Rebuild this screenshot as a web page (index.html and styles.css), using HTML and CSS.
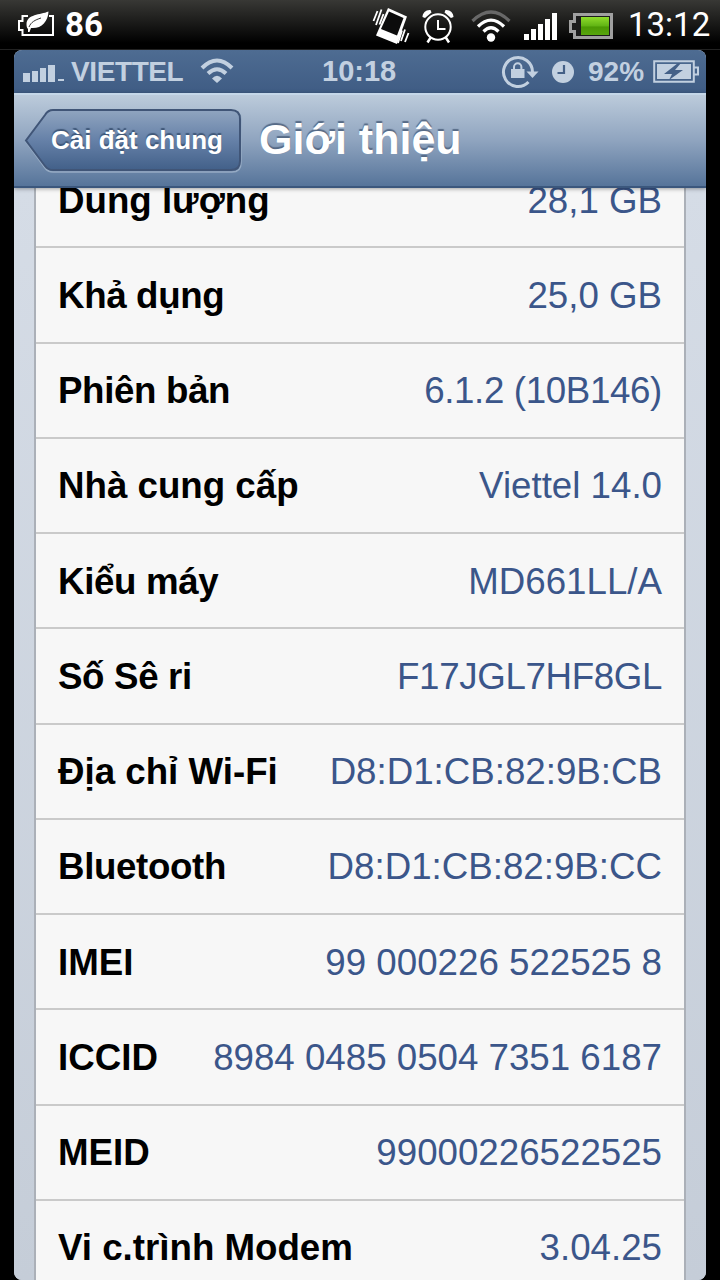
FILE: index.html
```
<!DOCTYPE html>
<html lang="vi">
<head>
    <meta charset="UTF-8">
    <meta name="viewport" content="width=device-width, initial-scale=1.0">
    <title>Giới thiệu</title>
    <link rel="stylesheet" href="styles.css">
</head>
<body>

    <div class="topbar">
        <svg class="leaf" width="38" height="28" viewBox="0 0 38 28">
            <path d="M11 7H5.500v5H2v9h3.500v5H36V7h-4" fill="none" stroke="#fff" stroke-width="2"/>
            <path d="M31.500 2.500C23 6 10 5 9.500 15c0 2 .3 4 1.500 5v3h1.500l1.500-4c10 1 17-6 17.500-16.500z" fill="#fff"/>
            <path d="M12 18c2-5 6-7 12-9" fill="none" stroke="#333" stroke-width="1"/>
        </svg>
        <span class="percent">86</span>
        <div class="top-icons">
            <svg class="vibrate" width="38" height="38" viewBox="0 0 38 38" fill="none" stroke="#fff">
                <path d="M16 2l19 8.500L25 38 4 29.500z" fill="#fff" stroke="none"/>
                <path d="M17 5.500l14.500 6.500L25 29.500 9 23z" fill="#0c0c0c" stroke="none"/>
                <path d="M5.500 5L1.500 15M9.500 3.500L4 19M11.500 8L7.500 18.500M30 24.500L26 37M33 23.500L29 35M36.500 27L33 36" stroke-width="1.800"/>
            </svg>
            <svg class="alarm" width="34" height="36" viewBox="0 0 34 36" fill="none" stroke="#fff" stroke-width="2">
                <circle cx="17" cy="19" r="12.700"/>
                <path d="M17 12v9h7.500" />
                <path d="M10 29l-3.500 5.500M24.500 29l3.500 5.500" stroke-width="2.500"/>
                <path d="M1.500 9C1.500 5 5 1.500 9.500 2l1 2.500L4 10zM32.500 9c0-4-3.500-7.500-8-7l-1 2.500L30 10z" fill="#fff" stroke="none"/>
            </svg>
            <svg class="wifi" width="40" height="34" viewBox="0 0 40 34" fill="none" stroke="#fff" stroke-width="3.200">
                <path d="M1.500 12Q20-6 38.500 12" stroke="#686868"/>
                <path d="M7 17.500Q20 4.500 33 17.500"/>
                <path d="M12.500 22.500Q20 15 27.500 22.500"/>
                <circle cx="20" cy="28.500" r="4.200" fill="#fff" stroke="none"/>
            </svg>
            <svg class="signal" width="33" height="27" viewBox="0 0 33 27" fill="#fff">
                <path d="M0 21h5v6H0zM7 16h5v11H7zM14 11h5v16h-5zM21 6h5v21h-5zM28 0h5v27h-5z"/>
            </svg>
            <svg class="battery" width="44" height="26" viewBox="0 0 44 26">
                <defs>
                    <linearGradient id="green" x2="0" y2="1">
                        <stop offset="0" stop-color="#8fdc2b"/>
                        <stop offset=".5" stop-color="#61b414"/>
                        <stop offset=".55" stop-color="#4b9903"/>
                        <stop offset="1" stop-color="#57a50d"/>
                    </linearGradient>
                </defs>
                <path d="M5.500 1.500h37v23h-37v-6h-4v-10h4z" fill="#1c1c1c" stroke="#a0a0a0" stroke-width="3"/>
                <path d="M12 4h28v18H12z" fill="url(#green)"/>
            </svg>
            <span class="time">13:12</span>
        </div>
    </div>

    <div class="phone">
        <div class="statusbar">
            <svg class="bars" width="41" height="18" viewBox="0 0 41 18" fill="#c2d0e0">
                <path d="M0 9h7v9H0zM9 7h6v11H9zM17 4h6v14h-6zM25 1h7v17h-7zM35 15h6v2h-6z"/>
            </svg>
            <span class="carrier">VIETTEL</span>
            <svg class="ios-wifi" width="34" height="25" viewBox="0 0 34 25" fill="none" stroke="#c2d0e0" stroke-width="4">
                <path d="M2 10Q17-5 32 10"/>
                <path d="M8 15.500Q17 7 26 15.500"/>
                <path d="M12 20.500Q17 15 22 20.500L17 25z" fill="#c2d0e0" stroke="none"/>
            </svg>
            <span class="clock">10:18</span>
            <svg class="lock" width="38" height="34" viewBox="0 0 38 34" fill="none" stroke="#c2d0e0">
                <path d="M27.500 27A14.500 14.500 0 1 1 31.500 17" stroke-width="3"/>
                <path d="M25.500 16.500h12L31.500 23z" fill="#c2d0e0" stroke="none"/>
                <path d="M10 14h13.500v9H10z" fill="#c2d0e0" stroke="none"/>
                <path d="M13 14v-2a3.700 3.700 0 0 1 7.400 0V14" stroke-width="2"/>
            </svg>
            <svg class="alarm-dot" width="22" height="22" viewBox="0 0 22 22">
                <circle cx="11" cy="11" r="11" fill="#c2d0e0"/>
                <path d="M12 4v8H5.500" fill="none" stroke="#446087" stroke-width="2.200"/>
            </svg>
            <span class="charge">92%</span>
            <svg class="ios-battery" width="46" height="23" viewBox="0 0 46 23">
                <path d="M1.200 1.200h39.600v20.600H1.200zM41 7.500h4v7h-4" fill="none" stroke="#c2d0e0" stroke-width="2"/>
                <path d="M4 4h34v15H4z" fill="#c2d0e0"/>
                <path d="M25 3L11 14h8l-3 6 14-10h-8l6-7z" fill="#446087"/>
            </svg>
        </div>

        <div class="navbar">
            <div class="back">
                <svg class="back-shape" width="219" height="66" viewBox="0 0 219 66">
                    <defs>
                        <linearGradient id="blue" x2="0" y2="1">
                            <stop offset="0" stop-color="#90a5c0"/>
                            <stop offset=".5" stop-color="#6681a8"/>
                            <stop offset="1" stop-color="#426089"/>
                        </linearGradient>
                    </defs>
                    <path d="M29 3h179q9 0 9 9v43q0 9-9 9H29q-5 0-8-4L2 34 21 8q3-5 8-5z" fill="none" stroke="#96abc4" stroke-width="1.500"/>
                    <path d="M29 2h178q9 0 9 9v42q0 9-9 9H29q-5 0-8-4L2 32.500 21 7q3-5 8-5z" fill="url(#blue)" stroke="#405577" stroke-width="2"/>
                </svg>
                <span class="back-text">Cài đặt chung</span>
            </div>
            <h1>Giới thiệu</h1>
        </div>

        <div class="content">
            <ul class="list">
                <li><b>Dung lượng</b><span>28,1 GB</span></li>
                <li><b class="tight">Khả dụng</b><span>25,0 GB</span></li>
                <li><b class="tight">Phiên bản</b><span class="tight">6.1.2 (10B146)</span></li>
                <li><b>Nhà cung cấp</b><span>Viettel 14.0</span></li>
                <li><b class="tight">Kiểu máy</b><span>MD661LL/A</span></li>
                <li><b class="tight">Số Sê ri</b><span class="tight">F17JGL7HF8GL</span></li>
                <li><b>Địa chỉ Wi-Fi</b><span>D8:D1:CB:82:9B:CB</span></li>
                <li><b class="tight">Bluetooth</b><span>D8:D1:CB:82:9B:CC</span></li>
                <li><b>IMEI</b><span>99 000226 522525 8</span></li>
                <li><b>ICCID</b><span>8984 0485 0504 7351 6187</span></li>
                <li><b>MEID</b><span>99000226522525</span></li>
                <li><b>Vi c.trình Modem</b><span>3.04.25</span></li>
            </ul>
        </div>
    </div>

</body>
</html>
```
FILE: styles.css
```
*{
    box-sizing: border-box;
}

body{
    margin: 0;
    height: 1280px;
    overflow: hidden;
    background: #000;
    font-family: "Liberation Sans", Arial, sans-serif;
}

svg{
    display: block;
    flex-shrink: 0;
}

/* outer status bar */
.topbar{
    display: flex;
    align-items: center;
    height: 50px;
    padding: 0 12px 0 17px;
    background: linear-gradient(#383835, #000 88%);
    border-bottom: 1px solid #222;
    color: #fff;
}

.leaf{
    margin-top: -3px;
}

.percent{
    margin-left: 10px;
    font: bold 33px Roboto, sans-serif;
}

.top-icons{
    display: flex;
    align-items: center;
    margin-left: auto;
}

.vibrate{
    margin-top: 1px;
}

.alarm{
    margin-left: 11px;
    margin-top: 3px;
}

.wifi{
    margin-left: 16px;
    margin-top: 2px;
}

.signal{
    margin-left: 13px;
    margin-top: 4px;
}

.battery{
    margin-left: 12px;
    margin-top: 3px;
}

.time{
    width: 80px;
    margin-left: 15px;
    font: 33px Roboto, sans-serif;
    white-space: nowrap;
}

.phone{
    height: 1230px;
    margin: 0 14px;
    border-radius: 8px;
    overflow: hidden;
    background: #d3dae3;
}

.statusbar{
    display: flex;
    align-items: center;
    height: 43px;
    padding: 0 7px 0 9px;
    background: linear-gradient(#4e6c92, #3f5c84);
    color: #c2d0e0;
    font-size: 28px;
    font-weight: bold;
}

.bars{
    margin-top: 3px;
}

.carrier{
    margin-left: 7px;
    width: 114px;
    letter-spacing: -.4px;
}

.ios-wifi{
    margin-left: 15px;
    margin-top: -2px;
}

.clock{
    margin-left: 88px;
    width: 76px;
    font-size: 29px;
}

.lock{
    margin-left: 103px;
}

.alarm-dot{
    margin-left: 13px;
}

.charge{
    margin-left: 14px;
    width: 60px;
}

.ios-battery{
    margin-left: 5px;
}

.navbar{
    position: relative;
    z-index: 1;
    display: flex;
    align-items: center;
    height: 95px;
    padding-left: 10px;
    background: linear-gradient(#bccbdb, #8fa4bf 50%, #56749a);
    border-top: 2px solid #c5d7e8;
    border-bottom: 2px solid #3b577d;
    box-shadow: 0 1px 4px rgba(0, 0, 0, .35);
    color: #fff;
}

.back{
    position: relative;
    width: 219px;
    height: 66px;
}

.back-shape{
    position: absolute;
    top: 0;
    left: 0;
}

.back-text{
    position: relative;
    display: block;
    padding-left: 27px;
    font-size: 26px;
    font-weight: bold;
    line-height: 65px;
    white-space: nowrap;
    text-shadow: 0 -2px 1px #3f5778;
}

h1{
    margin: 0 0 3px 16px;
    font-size: 43px;
    line-height: 50px;
    white-space: nowrap;
    text-shadow: 0 -2px 1px #566a86;
}

.content{
    height: 1092px;
    padding: 0 20px;
    overflow: hidden;
    background: linear-gradient(#d5dce6, #c5cdd8);
}

/* first row is scrolled partly under the navbar */
.list{
    margin: -35px 0 0;
    padding: 0;
    background: #f7f7f7;
    border-left: 2px solid #abb0b8;
    border-right: 2px solid #abb0b8;
    list-style: none;
}

.list li{
    display: flex;
    align-items: center;
    justify-content: space-between;
    height: 95.25px;
    padding: 2px 22px 0;
    border-bottom: 2px solid #cacaca;
    font-size: 36.7px;
    white-space: nowrap;
}

.list b{
    color: #000;
}

.list span{
    color: #3b568a;
}

.list .tight{
    letter-spacing: -.35px;
}
```
